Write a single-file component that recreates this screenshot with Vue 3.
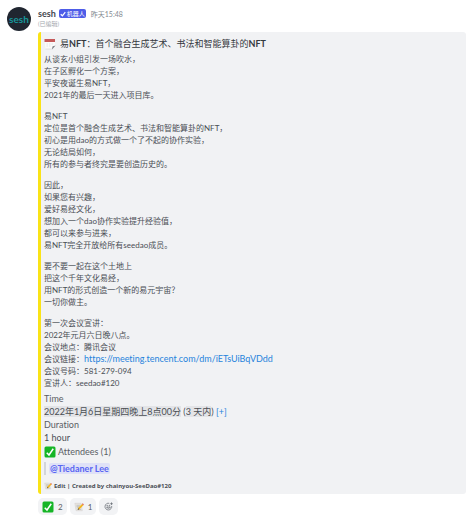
<script setup>
const paragraphs = [
  ['从谈玄小组引发一场吹水，', '在子区孵化一个方案，', '平安夜诞生易NFT，', '2021年的最后一天进入项目库。'],
  ['易NFT', '定位是首个融合生成艺术、书法和智能算卦的NFT，', '初心是用dao的方式做一个了不起的协作实验，', '无论结局如何，', '所有的参与者终究是要创造历史的。'],
  ['因此，', '如果您有兴趣，', '爱好易经文化，', '想加入一个dao协作实验提升经验值，', '都可以来参与进来，', '易NFT完全开放给所有seedao成员。'],
  ['要不要一起在这个土地上', '把这个千年文化易经，', '用NFT的形式创造一个新的易元宇宙？', '一切你做主。']
]
const link = 'https://meeting.tencent.com/dm/iETsUiBqVDdd'
</script>

<template>
  <article class="message">
    <div class="avatar">sesh</div>
    <div class="content">
      <header class="head">
        <span class="name">sesh</span>
        <span class="badge">
          <svg viewBox="0 0 10 10" aria-hidden="true"><path d="M1.2 5.4 4 8 8.8 2" /></svg>
          机器人
        </span>
        <time class="stamp">昨天15:48</time>
      </header>
      <div class="edited">(已编辑)</div>

      <section class="embed">
        <h1 class="title">
          <svg class="calendar" viewBox="0 0 24 24" aria-hidden="true">
            <path d="M1 3h21v13l-6 6H3z" fill="#fbfbfb" />
            <path d="M1 2h21v6H1z" fill="#c65a5a" />
            <path d="M5 12h3m2 0h3m2 0h3M5 16h3m2 0h3" stroke="#dcdee1" stroke-width="1.4" />
            <path d="M23 15l-7 8 1-6z" fill="#70757b" />
            <path d="M3 22h13" stroke="#c9cbce" />
          </svg>
          <span>易<b>NFT</b>：首个融合生成艺术、书法和智能算卦的<b>NFT</b></span>
        </h1>

        <div class="body">
          <p v-for="(lines, i) in paragraphs" :key="i">
            <span v-for="line in lines" :key="line" class="line">{{ line }}</span>
          </p>
          <p>
            <span class="line">第一次会议宣讲：</span>
            <span class="line">2022年元月六日晚八点。</span>
            <span class="line">会议地点：腾讯会议</span>
            <span class="line">会议链接：<a class="url" :href="link">{{ link }}</a></span>
            <span class="line">会议号码：581-279-094</span>
            <span class="line">宣讲人：seedao#120</span>
          </p>
        </div>

        <dl class="fields">
          <dt>Time</dt>
          <dd><span class="mark">2022年1月6日星期四晚上8点00分</span> (<span class="mark">3 天内</span>) <a href="#">[+]</a></dd>
          <dt>Duration</dt>
          <dd>1 hour</dd>
          <dt class="attendees">
            <svg class="check" viewBox="0 0 24 24" aria-hidden="true">
              <rect x="1" y="1" width="22" height="22" rx="3" fill="#16b526" />
              <path d="M5.500 13.500 10 18 18.500 5.500" />
            </svg>
            Attendees (1)
          </dt>
          <dd class="quote"><a class="mention" href="#">@Tiedaner Lee</a></dd>
        </dl>

        <footer class="foot">
          <svg class="memo" viewBox="0 0 24 24" aria-hidden="true">
            <path d="M2 3h15l3 18H5z" fill="#e8e5df" stroke="#c9c8c6" />
            <path d="M6 8h9M6 11h8M7 14h6M8 18h9" stroke="#969ba1" />
            <path d="M9 19l2-6L20 4l3 3-9 10z" fill="#f3b51d" />
            <path d="M19 5l2-2 3 3-2 2z" fill="#df6e79" />
            <path d="M9 19l1-4 3 2z" fill="#4f4b45" />
          </svg>
          Edit | Created by chainyou-SeeDao#120
        </footer>
      </section>

      <div class="reactions">
        <button type="button" class="reaction">
          <svg class="check" viewBox="0 0 24 24" aria-hidden="true">
            <rect x="1" y="1" width="22" height="22" rx="3" fill="#16b526" />
            <path d="M5.500 13.500 10 18 18.500 5.500" />
          </svg>
          2
        </button>
        <button type="button" class="reaction">
          <svg class="memo" viewBox="0 0 24 24" aria-hidden="true">
            <path d="M2 3h15l3 18H5z" fill="#e8e5df" stroke="#c9c8c6" />
            <path d="M6 8h9M6 11h8M7 14h6M8 18h9" stroke="#969ba1" />
            <path d="M9 19l2-6L20 4l3 3-9 10z" fill="#f3b51d" />
            <path d="M19 5l2-2 3 3-2 2z" fill="#df6e79" />
            <path d="M9 19l1-4 3 2z" fill="#4f4b45" />
          </svg>
          1
        </button>
        <button type="button" class="reaction add" aria-label="添加反应">
          <svg viewBox="0 0 24 24" aria-hidden="true">
            <path d="M14 3.500a9 9 0 1 0 6.500 7" />
            <path d="M7 13.500c1 4.500 9 4.500 10 0z" />
            <circle cx="8.500" cy="9.500" r="1" />
            <circle cx="14.500" cy="9.500" r="1" />
            <path d="M20 1v7M16.500 4.500h7" />
          </svg>
        </button>
      </div>
    </div>
  </article>
</template>

<style>
body {
  background: #fff;
}
</style>

<style scoped>
.message {
  display: flex;
  align-items: flex-start;
  gap: 7px;
  padding: 7px 7px 8px;
  color: #4a4e54;
  font-family: Lato, "Noto Sans CJK SC", sans-serif;
  font-size: 9px;
  font-variant-ligatures: none;
}
.avatar {
  display: flex;
  flex: none;
  align-items: center;
  justify-content: center;
  width: 24px;
  height: 24px;
  border-radius: 50%;
  background: #202630;
  color: #17969a;
  font-size: 10px;
  font-weight: 700;
}
.content {
  flex: 1;
  min-width: 0;
}
.head {
  display: flex;
  align-items: center;
  height: 13px;
}
.name {
  color: #43474d;
  font-size: 9px;
  font-weight: 700;
}
.badge {
  display: flex;
  align-items: center;
  gap: 1px;
  height: 9px;
  margin-left: 3px;
  padding: 0 1px;
  border-radius: 2px;
  background: #4e5de8;
  color: #fff;
  font-size: 6px;
}
.badge svg {
  width: 6px;
  height: 6px;
  fill: none;
  stroke: #fff;
  stroke-width: 2;
}
.stamp {
  margin-left: 5px;
  color: #858a91;
  font-size: 7px;
}
.edited {
  height: 12px;
  color: #a3a7ad;
  font-size: 6px;
  line-height: 8px;
}
.embed {
  padding: 5px 8px 2px 3px;
  border-left: 3px solid #fae317;
  border-radius: 3px;
  background: #f1f2f4;
}
.title {
  display: flex;
  align-items: center;
  gap: 4px;
  margin: 0 0 2px;
  color: #35393e;
  font-size: 9px;
  font-weight: 400;
  line-height: 14px;
}
.calendar {
  width: 12px;
  height: 12px;
}
.body {
  display: flex;
  flex-direction: column;
  gap: 9px;
  font-size: 8px;
  line-height: 12px;
}
.body p {
  margin: 0;
}
.line {
  display: block;
  height: 12px;
}
a {
  color: #2683dc;
  text-decoration: none;
}
.url {
  font-size: 9px;
}
.fields {
  margin: 3px 0 0;
  line-height: 13px;
}
.fields dd {
  margin: 0;
}
.fields dt {
  color: #5a5e64;
}
.mark {
  background: #e3e4e7;
}
.fields .attendees {
  display: flex;
  align-items: center;
  gap: 2px;
  height: 15px;
}
.check {
  width: 12px;
  height: 12px;
  fill: none;
}
.check path {
  stroke: #fff;
  stroke-width: 3;
}
.fields .quote {
  margin: 3px 0 0;
  padding-left: 3px;
  border-left: 2px solid #d2d5da;
}
.mention {
  padding: 0 1px;
  border-radius: 2px;
  background: #dfe1f7;
  color: #5865f2;
  font-weight: 700;
}
.foot {
  display: flex;
  align-items: center;
  gap: 2px;
  margin-top: 5px;
  font-family: "Noto Sans", sans-serif;
  font-size: 6px;
  font-weight: 700;
  line-height: 12px;
}
.memo {
  width: 10px;
  height: 10px;
  fill: none;
}
.foot .memo {
  width: 8px;
  height: 8px;
}
.reactions {
  display: flex;
  gap: 3px;
  margin-top: 4px;
}
.reaction {
  display: flex;
  align-items: center;
  gap: 4px;
  height: 17px;
  padding: 0 4px;
  border: 0;
  border-radius: 5px;
  background: #f2f3f5;
  color: #5a5e64;
  font: inherit;
  font-size: 8px;
}
.reaction.add {
  padding: 0 5px;
}
.add svg {
  width: 9px;
  height: 9px;
  fill: none;
  stroke: #666b73;
  stroke-width: 2;
}
</style>
